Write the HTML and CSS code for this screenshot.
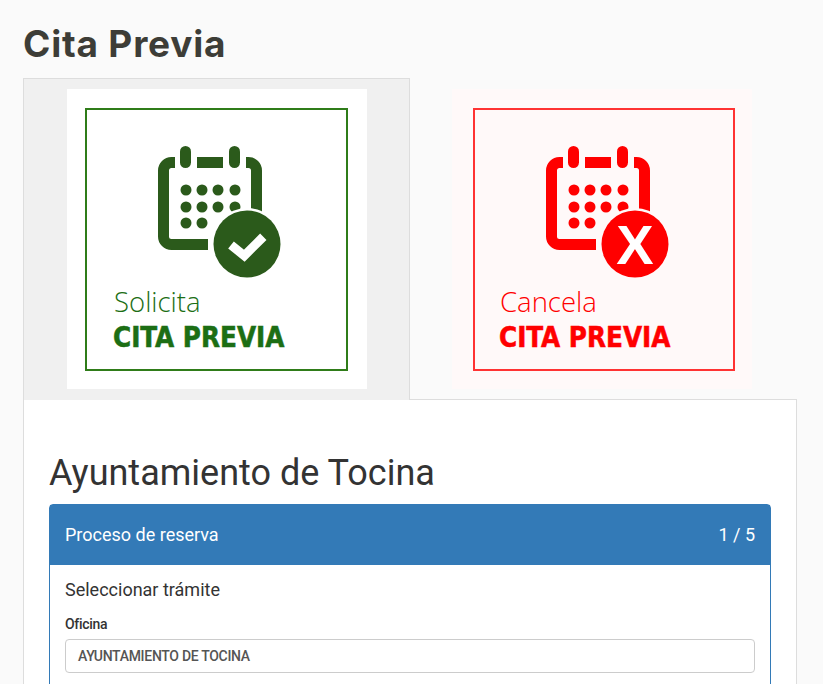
FILE: index.html
```html
<!DOCTYPE html>
<html lang="es">
<head>
  <meta charset="UTF-8" />
  <title>Cita Previa</title>
  <link rel="stylesheet" href="styles.css">
</head>
<body>
  <svg class="defs" width="0" height="0">
    <defs>
      <g id="calendar">
        <path class="cal-line" d="M17 16.5H13.5a8 8 0 0 0-8 8V90.500a8 8 0 0 0 8 8H50" />
        <path class="cal-line" d="M88 16.500H90.500a8 8 0 0 1 8 8V70" />
        <rect class="cal-fill" x="39" y="11" width="26" height="11" />
        <rect class="cal-fill" x="22" y="0" width="11" height="22" rx="5.500" />
        <rect class="cal-fill" x="71" y="0" width="11" height="22" rx="5.500" />
        <circle class="cal-fill" cx="28" cy="44" r="5.500" />
        <circle class="cal-fill" cx="44" cy="44" r="5.500" />
        <circle class="cal-fill" cx="60" cy="44" r="5.500" />
        <circle class="cal-fill" cx="77" cy="44" r="5.500" />
        <circle class="cal-fill" cx="28" cy="61" r="5.500" />
        <circle class="cal-fill" cx="44" cy="61" r="5.500" />
        <circle class="cal-fill" cx="60" cy="61" r="5.500" />
        <circle class="cal-fill" cx="77" cy="61" r="5.500" />
        <circle class="cal-fill" cx="28" cy="77" r="5.500" />
        <circle class="cal-fill" cx="44" cy="77" r="5.500" />
        <circle class="cal-halo" cx="89" cy="98" r="36" />
        <circle class="cal-fill" cx="89" cy="98" r="33.500" />
      </g>
    </defs>
  </svg>

  <h1 class="page-title">Cita Previa</h1>

  <div class="tabs">
    <div class="tab tab-active">
      <a class="tile tile-green" href="#">
        <div class="tile-frame">
          <svg class="tile-icon" width="124" height="132" viewBox="0 0 124 132">
            <use href="#calendar" />
            <path class="tick" d="M73 99L86.300 109.700L105.300 90.700" />
          </svg>
          <div class="tile-verb">Solicita</div>
          <div class="tile-name">CITA PREVIA</div>
        </div>
      </a>
    </div>
    <div class="tab">
      <a class="tile tile-red" href="#">
        <div class="tile-frame">
          <svg class="tile-icon" width="124" height="132" viewBox="0 0 124 132">
            <use href="#calendar" />
            <text class="cross" x="89" y="118" text-anchor="middle">X</text>
          </svg>
          <div class="tile-verb">Cancela</div>
          <div class="tile-name">CITA PREVIA</div>
        </div>
      </a>
    </div>
  </div>

  <div class="tab-content">
    <h2 class="office-title">Ayuntamiento de Tocina</h2>
    <div class="panel">
      <div class="panel-heading">
        <span>Proceso de reserva</span>
        <span>1 / 5</span>
      </div>
      <div class="panel-body">
        <p class="step-title">Seleccionar trámite</p>
        <label class="field-label" for="oficina">Oficina</label>
        <div class="field-value" id="oficina">AYUNTAMIENTO DE TOCINA</div>
      </div>
    </div>
  </div>
</body>
</html>
```

FILE: styles.css
```css
html, body {
  height: 100%;
  overflow: hidden;
}
body {
  font-family: Roboto, Arial, sans-serif;
  background: #fafafa;
  margin: 0;
  padding: 0 26px 0 23px;
  color: #333;
}
.defs {
  position: absolute;
}
.page-title {
  font-family: Inter, Arial, sans-serif;
  font-size: 37px;
  font-weight: 700;
  letter-spacing: 0.8px;
  line-height: 42px;
  color: #3d3d37;
  margin: 0;
  padding: 23px 0 13px;
}
.tabs {
  display: flex;
  align-items: flex-start;
}
.tab {
  width: 387px;
  height: 321px;
  box-sizing: border-box;
  padding: 11px 0 0 42px;
}
.tab-active {
  height: 322px;
  padding: 10px 0 0 43px;
  background: #f0f0f0;
  border: 1px solid #ddd;
  border-bottom: none;
  margin-bottom: -1px;
  position: relative;
}
.tile {
  display: block;
  width: 300px;
  height: 300px;
  padding: 19px 0 0 18px;
  box-sizing: border-box;
  text-decoration: none;
  background: #fff;
  --ink: #2b5a1b;
  --halo: #fff;
}
.tile-green {
  color: #1c6e14;
}
.tile-green .tile-frame {
  border-color: #2f7c19;
}
.tile-red {
  color: #f00;
  background: #fff9f9;
  padding-left: 21px;
  --ink: #f00;
  --halo: #fff9f9;
}
.tile-red .tile-frame {
  width: 262px;
  border-color: #f33;
  padding-left: 25px;
}
.tile-red .tile-icon {
  margin-left: 46px;
}
.tile-frame {
  width: 263px;
  height: 263px;
  box-sizing: border-box;
  border: 2px solid;
  padding: 36px 0 0 27px;
}
.tile-icon {
  display: block;
  margin-left: 44px;
}
.cal-line {
  fill: none;
  stroke: var(--ink);
  stroke-width: 11;
}
.cal-fill {
  fill: var(--ink);
}
.cal-halo {
  fill: var(--halo);
}
.tick {
  fill: none;
  stroke: #fff;
  stroke-width: 9;
}
.cross {
  font-family: "Liberation Sans", Arial, sans-serif;
  font-size: 56px;
  font-weight: 700;
  fill: #fff;
}
.tile-verb {
  font-family: "Open Sans", Arial, sans-serif;
  font-weight: 300;
  font-size: 27.5px;
  line-height: 30px;
  margin-top: 9px;
}
.tile-name {
  font-family: "DejaVu Sans Condensed", "DejaVu Sans", Verdana, sans-serif;
  font-weight: 700;
  font-size: 27.5px;
  -webkit-text-stroke: 0.5px currentColor;
  line-height: 30px;
  margin: 5px 0 0 -1px;
  white-space: nowrap;
}
.tab-content {
  background: #fff;
  border: 1px solid #ddd;
  padding: 49px 25px 40px;
  height: 400px;
}
.office-title {
  font-size: 36px;
  font-weight: 400;
  line-height: 48px;
  margin: 0 0 7px;
  color: #333;
}
.panel {
  border: 1px solid #337ab7;
  border-radius: 4px;
  background: #fff;
}
.panel-heading {
  display: flex;
  justify-content: space-between;
  align-items: center;
  height: 60px;
  box-sizing: border-box;
  padding: 0 15px 2px;
  background: #337ab7;
  color: #fff;
  font-size: 18px;
}
.panel-body {
  padding: 15px;
}
.step-title {
  font-size: 18px;
  line-height: 20px;
  margin: 0 0 14px;
}
.field-label {
  display: block;
  font-size: 14px;
  font-weight: 500;
  letter-spacing: -0.3px;
  line-height: 20px;
  margin-bottom: 5px;
}
.field-value {
  height: 34px;
  box-sizing: border-box;
  border: 1px solid #ccc;
  border-radius: 4px;
  padding: 0 12px;
  font-size: 14px;
  font-weight: 500;
  letter-spacing: -0.3px;
  line-height: 32px;
  color: #555;
}
```
